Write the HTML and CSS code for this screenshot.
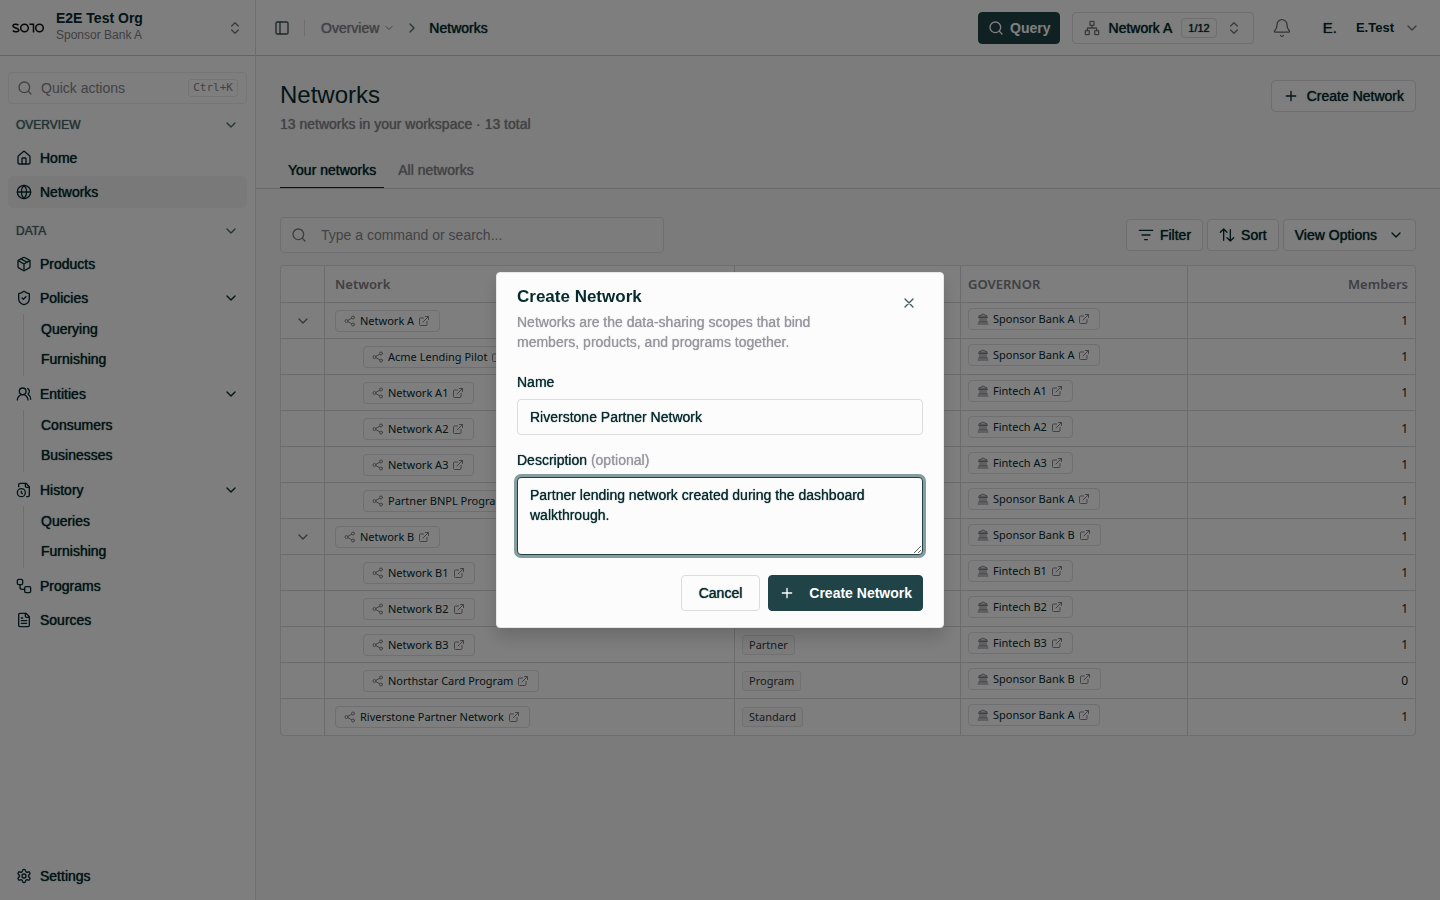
FILE: index.html
```html
<!DOCTYPE html>
<html lang="en">
<head>
<meta charset="utf-8">
<title>Networks</title>
<link rel="stylesheet" href="styles.css">
</head>
<body>
<svg class="sprite" aria-hidden="true">
  <symbol id="updown" viewBox="0 0 24 24"><path d="m7 15 5 5 5-5M7 9l5-5 5 5"/></symbol>
  <symbol id="down" viewBox="0 0 24 24"><path d="m6 9 6 6 6-6"/></symbol>
  <symbol id="right" viewBox="0 0 24 24"><path d="m9 18 6-6-6-6"/></symbol>
  <symbol id="search" viewBox="0 0 24 24"><circle cx="11" cy="11" r="8"/><path d="m21 21-4.3-4.3"/></symbol>
  <symbol id="home" viewBox="0 0 24 24"><path d="M15 21v-8a1 1 0 0 0-1-1h-4a1 1 0 0 0-1 1v8"/><path d="M3 10a2 2 0 0 1 .7-1.5l7-6a2 2 0 0 1 2.6 0l7 6A2 2 0 0 1 21 10v9a2 2 0 0 1-2 2H5a2 2 0 0 1-2-2z"/></symbol>
  <symbol id="globe" viewBox="0 0 24 24"><circle cx="12" cy="12" r="10"/><path d="M12 2a14.5 14.5 0 0 0 0 20 14.5 14.5 0 0 0 0-20M2 12h20"/></symbol>
  <symbol id="box" viewBox="0 0 24 24"><path d="m7.500 4.270 9 5.150"/><path d="M21 8a2 2 0 0 0-1-1.730l-7-4a2 2 0 0 0-2 0l-7 4A2 2 0 0 0 3 8v8a2 2 0 0 0 1 1.730l7 4a2 2 0 0 0 2 0l7-4A2 2 0 0 0 21 16Z"/><path d="m3.300 7 8.700 5 8.700-5M12 22V12"/></symbol>
  <symbol id="shield" viewBox="0 0 24 24"><path d="M20 13c0 5-3.500 7.500-7.660 8.950a1 1 0 0 1-.670-.010C7.500 20.500 4 18 4 13V6a1 1 0 0 1 1-1c2 0 4.500-1.200 6.240-2.720a1.170 1.170 0 0 1 1.520 0C14.510 3.810 17 5 19 5a1 1 0 0 1 1 1z"/><path d="m9 12 2 2 4-4"/></symbol>
  <symbol id="users" viewBox="0 0 24 24"><path d="M18 21a8 8 0 0 0-16 0"/><circle cx="10" cy="8" r="5"/><path d="M22 20c0-3.370-2-6.500-4-8a5 5 0 0 0-.450-8.300"/></symbol>
  <symbol id="fileclock" viewBox="0 0 24 24"><path d="M16 22h2a2 2 0 0 0 2-2V7l-5-5H6a2 2 0 0 0-2 2v3"/><path d="M14 2v4a2 2 0 0 0 2 2h4"/><circle cx="8" cy="16" r="6"/><path d="M9.500 17.500 8 16.250V14"/></symbol>
  <symbol id="flow" viewBox="0 0 24 24"><rect x="2" y="2" width="8" height="8" rx="2"/><path d="M6 10v4a3 3 0 0 0 3 3h4"/><rect x="13" y="13" width="9" height="9" rx="2"/></symbol>
  <symbol id="file" viewBox="0 0 24 24"><path d="M15 2H6a2 2 0 0 0-2 2v16a2 2 0 0 0 2 2h12a2 2 0 0 0 2-2V7Z"/><path d="M14 2v4a2 2 0 0 0 2 2h4M10 9H8M16 13H8M16 17H8"/></symbol>
  <symbol id="gear" viewBox="0 0 24 24"><path d="M12.220 2h-.440a2 2 0 0 0-2 2v.180a2 2 0 0 1-1 1.730l-.430.250a2 2 0 0 1-2 0l-.150-.080a2 2 0 0 0-2.730.730l-.220.380a2 2 0 0 0 .730 2.730l.150.100a2 2 0 0 1 1 1.720v.510a2 2 0 0 1-1 1.740l-.150.090a2 2 0 0 0-.730 2.730l.220.380a2 2 0 0 0 2.730.730l.150-.080a2 2 0 0 1 2 0l.430.250a2 2 0 0 1 1 1.730V20a2 2 0 0 0 2 2h.440a2 2 0 0 0 2-2v-.180a2 2 0 0 1 1-1.730l.430-.250a2 2 0 0 1 2 0l.150.080a2 2 0 0 0 2.730-.730l.220-.390a2 2 0 0 0-.730-2.730l-.150-.080a2 2 0 0 1-1-1.740v-.500a2 2 0 0 1 1-1.740l.150-.090a2 2 0 0 0 .730-2.730l-.220-.380a2 2 0 0 0-2.730-.730l-.150.080a2 2 0 0 1-2 0l-.430-.250a2 2 0 0 1-1-1.730V4a2 2 0 0 0-2-2z"/><circle cx="12" cy="12" r="3"/></symbol>
  <symbol id="panel" viewBox="0 0 24 24"><rect x="3" y="3" width="18" height="18" rx="2"/><path d="M9 3v18"/></symbol>
  <symbol id="tree" viewBox="0 0 24 24"><rect x="16" y="16" width="6" height="6" rx="1"/><rect x="2" y="16" width="6" height="6" rx="1"/><rect x="9" y="2" width="6" height="6" rx="1"/><path d="M5 16v-3a1 1 0 0 1 1-1h12a1 1 0 0 1 1 1v3M12 12V8"/></symbol>
  <symbol id="bell" viewBox="0 0 24 24"><path d="M10.270 21a2 2 0 0 0 3.460 0"/><path d="M3.260 15.330A1 1 0 0 0 4 17h16a1 1 0 0 0 .740-1.670C19.410 13.960 18 12.500 18 8A6 6 0 0 0 6 8c0 4.500-1.410 5.960-2.740 7.330"/></symbol>
  <symbol id="plus" viewBox="0 0 24 24"><path d="M5 12h14M12 5v14"/></symbol>
  <symbol id="close" viewBox="0 0 24 24"><path d="M18 6 6 18M6 6l12 12"/></symbol>
  <symbol id="filter" viewBox="0 0 24 24"><path d="M2 5h20M6 12h12M10 19h4"/></symbol>
  <symbol id="sort" viewBox="0 0 24 24"><path d="m2 8 5-5 5 5M7 3v17M22 16l-5 5-5-5M17 21V4"/></symbol>
  <symbol id="share" viewBox="0 0 24 24"><circle cx="18" cy="5" r="3"/><circle cx="5" cy="12" r="3"/><circle cx="18" cy="19" r="3"/><path d="m8 13.500 7.500 4M15.500 6.500 8 10.500"/></symbol>
  <symbol id="ext" viewBox="0 0 24 24"><path d="M15 3h6v6M10 14 21 3M18 13v6a2 2 0 0 1-2 2H5a2 2 0 0 1-2-2V8a2 2 0 0 1 2-2h6"/></symbol>
  <symbol id="bank" viewBox="0 0 24 24"><path d="M2 22h20M3 18h18M6 18v-8M10 18v-8M14 18v-8M18 18v-8M3 9h18M4 6l8-4 8 4Z"/></symbol>
</svg>

<div class="app">
  <aside class="sidebar">
    <button class="org" type="button">
      <svg class="logo" viewBox="0 0 32 10" role="img" aria-label="SOTO"><path d="M6.500 2.200C5 .8 1 .8 1 3c0 2.400 5.800 1.400 5.800 4 0 2.300-4.500 2.400-6 .6"/><circle cx="12.500" cy="5" r="3.800"/><path d="M17.500 1.200h4V9.500"/><circle cx="27.500" cy="5" r="3.800"/></svg>
      <span class="org-text"><strong>E2E Test Org</strong><span>Sponsor Bank A</span></span>
      <svg class="i dim"><use href="#updown"/></svg>
    </button>
    <nav class="nav">
      <button class="quick" type="button"><svg class="i"><use href="#search"/></svg><span>Quick actions</span><kbd>Ctrl+K</kbd></button>
      <button class="group" type="button">OVERVIEW<svg class="i"><use href="#down"/></svg></button>
      <a class="item" href="#"><svg class="i"><use href="#home"/></svg>Home</a>
      <a class="item active" href="#"><svg class="i"><use href="#globe"/></svg>Networks</a>
      <button class="group next" type="button">DATA<svg class="i"><use href="#down"/></svg></button>
      <a class="item" href="#"><svg class="i"><use href="#box"/></svg>Products</a>
      <a class="item" href="#"><svg class="i"><use href="#shield"/></svg>Policies<svg class="i end"><use href="#down"/></svg></a>
      <div class="sub"><a href="#">Querying</a><a href="#">Furnishing</a></div>
      <a class="item" href="#"><svg class="i"><use href="#users"/></svg>Entities<svg class="i end"><use href="#down"/></svg></a>
      <div class="sub"><a href="#">Consumers</a><a href="#">Businesses</a></div>
      <a class="item" href="#"><svg class="i"><use href="#fileclock"/></svg>History<svg class="i end"><use href="#down"/></svg></a>
      <div class="sub"><a href="#">Queries</a><a href="#">Furnishing</a></div>
      <a class="item" href="#"><svg class="i"><use href="#flow"/></svg>Programs</a>
      <a class="item" href="#"><svg class="i"><use href="#file"/></svg>Sources</a>
      <a class="item bottom" href="#"><svg class="i"><use href="#gear"/></svg>Settings</a>
    </nav>
  </aside>

  <div class="main">
    <header class="topbar">
      <button class="toggle" type="button" aria-label="Toggle sidebar"><svg class="i"><use href="#panel"/></svg></button>
      <span class="sep"></span>
      <nav class="crumbs"><a href="#">Overview<svg class="i small"><use href="#down"/></svg></a><svg class="i"><use href="#right"/></svg><span class="medium">Networks</span></nav>
      <div class="actions">
        <button class="btn primary query" type="button"><svg class="i"><use href="#search"/></svg>Query</button>
        <button class="btn selector" type="button"><svg class="i dim"><use href="#tree"/></svg><span class="medium">Network A</span><span class="count">1/12</span><svg class="i dim"><use href="#updown"/></svg></button>
        <button class="bell" type="button" aria-label="Notifications"><svg class="i large"><use href="#bell"/></svg></button>
        <button class="user" type="button"><span class="initial medium">E.</span><strong>E.Test</strong><svg class="i dim"><use href="#down"/></svg></button>
      </div>
    </header>

    <section class="page-head">
      <div class="head-row">
        <div><h1>Networks</h1><p>13 networks in your workspace · 13 total</p></div>
        <button class="btn create" type="button"><svg class="i"><use href="#plus"/></svg>Create Network</button>
      </div>
      <div class="tabs"><button class="tab on" type="button">Your networks</button><button class="tab" type="button">All networks</button></div>
    </section>

    <section class="content">
      <div class="toolbar">
        <label class="search"><svg class="i"><use href="#search"/></svg><input type="text" placeholder="Type a command or search..." aria-label="Search networks"></label>
        <div class="tools">
          <button class="btn" type="button"><svg class="i"><use href="#filter"/></svg>Filter</button>
          <button class="btn" type="button"><svg class="i"><use href="#sort"/></svg>Sort</button>
          <button class="btn view" type="button">View Options<svg class="i"><use href="#down"/></svg></button>
        </div>
      </div>
      <div class="table-wrap">
        <table>
          <colgroup><col class="c-toggle"><col class="c-name"><col class="c-type"><col class="c-gov"><col></colgroup>
          <thead><tr><th></th><th>Network</th><th></th><th>GOVERNOR</th><th class="num">Members</th></tr></thead>
          <tbody>
            <tr><td class="tog"><svg class="i"><use href="#down"/></svg></td><td class="name"><a class="chip" href="#"><svg class="i small"><use href="#share"/></svg>Network A<svg class="i small"><use href="#ext"/></svg></a></td><td></td><td class="gov"><a class="chip" href="#"><svg class="i small"><use href="#bank"/></svg>Sponsor Bank A<svg class="i small"><use href="#ext"/></svg></a></td><td class="num">1</td></tr>
            <tr><td></td><td class="name child"><a class="chip" href="#"><svg class="i small"><use href="#share"/></svg>Acme Lending Pilot<svg class="i small"><use href="#ext"/></svg></a></td><td></td><td class="gov"><a class="chip" href="#"><svg class="i small"><use href="#bank"/></svg>Sponsor Bank A<svg class="i small"><use href="#ext"/></svg></a></td><td class="num">1</td></tr>
            <tr><td></td><td class="name child"><a class="chip" href="#"><svg class="i small"><use href="#share"/></svg>Network A1<svg class="i small"><use href="#ext"/></svg></a></td><td></td><td class="gov"><a class="chip" href="#"><svg class="i small"><use href="#bank"/></svg>Fintech A1<svg class="i small"><use href="#ext"/></svg></a></td><td class="num">1</td></tr>
            <tr><td></td><td class="name child"><a class="chip" href="#"><svg class="i small"><use href="#share"/></svg>Network A2<svg class="i small"><use href="#ext"/></svg></a></td><td></td><td class="gov"><a class="chip" href="#"><svg class="i small"><use href="#bank"/></svg>Fintech A2<svg class="i small"><use href="#ext"/></svg></a></td><td class="num">1</td></tr>
            <tr><td></td><td class="name child"><a class="chip" href="#"><svg class="i small"><use href="#share"/></svg>Network A3<svg class="i small"><use href="#ext"/></svg></a></td><td></td><td class="gov"><a class="chip" href="#"><svg class="i small"><use href="#bank"/></svg>Fintech A3<svg class="i small"><use href="#ext"/></svg></a></td><td class="num">1</td></tr>
            <tr><td></td><td class="name child"><a class="chip" href="#"><svg class="i small"><use href="#share"/></svg>Partner BNPL Program<svg class="i small"><use href="#ext"/></svg></a></td><td></td><td class="gov"><a class="chip" href="#"><svg class="i small"><use href="#bank"/></svg>Sponsor Bank A<svg class="i small"><use href="#ext"/></svg></a></td><td class="num">1</td></tr>
            <tr><td class="tog"><svg class="i"><use href="#down"/></svg></td><td class="name"><a class="chip" href="#"><svg class="i small"><use href="#share"/></svg>Network B<svg class="i small"><use href="#ext"/></svg></a></td><td></td><td class="gov"><a class="chip" href="#"><svg class="i small"><use href="#bank"/></svg>Sponsor Bank B<svg class="i small"><use href="#ext"/></svg></a></td><td class="num">1</td></tr>
            <tr><td></td><td class="name child"><a class="chip" href="#"><svg class="i small"><use href="#share"/></svg>Network B1<svg class="i small"><use href="#ext"/></svg></a></td><td></td><td class="gov"><a class="chip" href="#"><svg class="i small"><use href="#bank"/></svg>Fintech B1<svg class="i small"><use href="#ext"/></svg></a></td><td class="num">1</td></tr>
            <tr><td></td><td class="name child"><a class="chip" href="#"><svg class="i small"><use href="#share"/></svg>Network B2<svg class="i small"><use href="#ext"/></svg></a></td><td></td><td class="gov"><a class="chip" href="#"><svg class="i small"><use href="#bank"/></svg>Fintech B2<svg class="i small"><use href="#ext"/></svg></a></td><td class="num">1</td></tr>
            <tr><td></td><td class="name child"><a class="chip" href="#"><svg class="i small"><use href="#share"/></svg>Network B3<svg class="i small"><use href="#ext"/></svg></a></td><td><span class="badge">Partner</span></td><td class="gov"><a class="chip" href="#"><svg class="i small"><use href="#bank"/></svg>Fintech B3<svg class="i small"><use href="#ext"/></svg></a></td><td class="num">1</td></tr>
            <tr><td></td><td class="name child"><a class="chip" href="#"><svg class="i small"><use href="#share"/></svg>Northstar Card Program<svg class="i small"><use href="#ext"/></svg></a></td><td><span class="badge">Program</span></td><td class="gov"><a class="chip" href="#"><svg class="i small"><use href="#bank"/></svg>Sponsor Bank B<svg class="i small"><use href="#ext"/></svg></a></td><td class="num">0</td></tr>
            <tr><td></td><td class="name"><a class="chip" href="#"><svg class="i small"><use href="#share"/></svg>Riverstone Partner Network<svg class="i small"><use href="#ext"/></svg></a></td><td><span class="badge">Standard</span></td><td class="gov"><a class="chip" href="#"><svg class="i small"><use href="#bank"/></svg>Sponsor Bank A<svg class="i small"><use href="#ext"/></svg></a></td><td class="num">1</td></tr>
          </tbody>
        </table>
      </div>
    </section>
  </div>
</div>

<div class="overlay">
  <form class="modal" role="dialog" aria-modal="true" aria-labelledby="dlg-title">
    <div class="modal-head">
      <div><h2 id="dlg-title">Create Network</h2><p>Networks are the data-sharing scopes that bind members, products, and programs together.</p></div>
      <button class="x" type="button" aria-label="Close"><svg class="i"><use href="#close"/></svg></button>
    </div>
    <div class="field"><label class="medium" for="n">Name</label><input id="n" type="text" value="Riverstone Partner Network"></div>
    <div class="field"><label for="d"><span class="medium">Description</span> <span class="opt">(optional)</span></label><textarea id="d">Partner lending network created during the dashboard walkthrough.</textarea></div>
    <div class="modal-foot">
      <button class="btn cancel" type="button">Cancel</button>
      <button class="btn primary submit" type="submit"><svg class="i"><use href="#plus"/></svg>Create Network</button>
    </div>
  </form>
</div>
</body>
</html>
```
FILE: styles.css
```css
:root {
  --ink: #062a2d;
  --muted: #96969c;
  --line: #dcdce0;
  --surface: #fcfcfc;
  --teal: #1f4347;
}
* { box-sizing: border-box; }
body { margin: 0; font: 14px/20px "Liberation Sans", Arial, sans-serif; color: var(--ink); background: #f6f6f6; }
button, input, textarea { font: inherit; color: inherit; }
button { border: 0; background: none; padding: 0; text-align: left; }
a { color: inherit; text-decoration: none; }
h1, h2, p { margin: 0; }
.sprite { position: absolute; width: 0; height: 0; }
.i { width: 16px; height: 16px; flex: none; fill: none; stroke: currentColor; stroke-width: 2; stroke-linecap: round; stroke-linejoin: round; }
.i.small { width: 12px; height: 12px; }
.i.large { width: 20px; height: 20px; stroke-width: 1.5; }
.dim { color: #77777c; }
.medium { text-shadow: 0 0 1px currentColor; }

.app { display: flex; min-height: 100vh; }
.sidebar { width: 256px; flex: none; display: flex; flex-direction: column; background: var(--surface); border-right: 1px solid var(--line); }
.org { display: flex; align-items: center; gap: 12px; height: 56px; padding: 0 12px; border-bottom: 1px solid #c8c8cc; }
.logo { width: 32px; height: 10px; fill: none; stroke: #111; stroke-width: 1.5; }
.org-text { display: flex; flex-direction: column; flex: 1; line-height: 18px; padding-bottom: 4px; }
.org-text span { font-size: 12px; line-height: 16px; color: #808085; }
.nav { flex: 1; display: flex; flex-direction: column; gap: 2px; padding: 16px 8px 8px; }
.quick { display: flex; align-items: center; gap: 8px; height: 32px; margin-bottom: 4px; padding: 0 8px; border: 1px solid #ededf0; border-radius: 4px; color: #85858b; }
.quick span { flex: 1; }
kbd { font: 11px/16px "DejaVu Sans Mono", monospace; padding: 0 4px; border: 1px solid #e8e8ec; border-radius: 3px; }
.group { display: flex; align-items: center; justify-content: space-between; height: 30px; padding: 0 8px; font-size: 12px; color: #4a666a; text-shadow: 0 0 1px currentColor; }
.group.next { margin-top: 6px; }
.item { display: flex; align-items: center; gap: 8px; height: 32px; padding: 0 8px; border-radius: 6px; text-shadow: 0 0 1px currentColor; }
.item.active { background: #f2f2f3; }
.item .end { margin-left: auto; }
.sub { display: flex; flex-direction: column; gap: 2px; margin: -2px 0 0 15px; padding: 2px 0; border-left: 1px solid var(--line); }
.sub a { height: 28px; padding: 3px 17px; text-shadow: 0 0 1px currentColor; }
.bottom { margin-top: auto; }

.main { flex: 1; min-width: 0; display: flex; flex-direction: column; }
.topbar { display: flex; align-items: center; height: 56px; padding: 0 20px 0 12px; background: var(--surface); border-bottom: 1px solid #c8c8cc; }
.toggle { display: grid; place-items: center; width: 28px; height: 28px; color: #3c5054; }
.sep { width: 1px; height: 16px; margin: 0 16px 0 8px; background: var(--line); }
.crumbs { display: flex; align-items: center; gap: 9px; }
.crumbs a { display: flex; align-items: center; gap: 4px; color: #85858b; text-shadow: 0 0 1px currentColor; }
.crumbs > .i { color: #55686b; }
.actions { display: flex; align-items: center; margin-left: auto; }
.btn { display: inline-flex; align-items: center; gap: 6px; height: 32px; padding: 0 11px; border: 1px solid var(--line); border-radius: 4px; background: var(--surface); text-shadow: 0 0 1px currentColor; }
.btn.primary { background: var(--teal); border-color: var(--teal); color: #fff; font-weight: 700; text-shadow: none; }
.query { margin-right: 12px; padding: 0 8px 0 9px; }
.selector { gap: 9px; padding: 0 11px; }
.count { padding: 0 6px; border: 1px solid var(--line); border-radius: 4px; font-size: 11px; line-height: 18px; }
.bell { display: grid; place-items: center; margin: 0 18px; color: #66666b; }
.user { display: flex; align-items: center; }
.user strong { font-size: 13px; }
.initial { margin: 0 19px 0 13px; font-size: 15px; }
.user .i { margin-left: 10px; }

.page-head { padding: 24px 24px 0; background: #f9f9f9; border-bottom: 1px solid #d2d2d6; }
.head-row { display: flex; justify-content: space-between; align-items: flex-start; }
h1 { font-size: 24px; line-height: 30px; font-weight: 400; }
.head-row p { margin-top: 4px; color: #85858b; text-shadow: 0 0 1px currentColor; }
.create { padding: 0 11px; gap: 8px; }
.tabs { display: flex; gap: 6px; margin-top: 18px; }
.tab { height: 36px; padding: 0 8px; color: #85858b; border-bottom: 1px solid transparent; text-shadow: 0 0 1px currentColor; }
.tab.on { color: var(--ink); border-color: var(--ink); }

.content { padding: 28px 24px; }
.toolbar { display: flex; align-items: center; justify-content: space-between; margin-bottom: 12px; }
.search { display: flex; align-items: center; gap: 14px; width: 384px; height: 36px; padding: 0 10px; background: #f9f9f9; border: 1px solid var(--line); border-radius: 4px; color: #7c7c82; }
.search input { flex: 1; min-width: 0; padding: 0; border: 0; outline: 0; background: none; }
.search input::placeholder { color: #85858b; opacity: 1; }
.tools { display: flex; gap: 4px; }
.view { gap: 11px; }

.table-wrap { border: 1px solid var(--line); border-radius: 4px; background: var(--surface); overflow: hidden; }
table { width: 100%; table-layout: fixed; border-collapse: separate; border-spacing: 0; font: 11px/16px "Noto Sans", sans-serif; }
.c-toggle { width: 44px; }
.c-name { width: 410px; }
.c-type { width: 226px; }
.c-gov { width: 227px; }
th, td { height: 36px; padding: 0 7px; border-right: 1px solid #d6d6da; border-bottom: 1px solid #d6d6da; text-align: left; vertical-align: middle; overflow: hidden; }
th { height: 37px; font-size: 13px; font-weight: 600; color: #808085; }
th:nth-child(2), .name { padding-left: 10px; }
.child { padding-left: 38px; }
th:last-child, td:last-child { border-right: 0; }
tbody tr:last-child td { border-bottom: 0; }
.num { text-align: right; font-size: 12px; }
th.num { font-size: 13px; }
.tog { padding: 0 0 0 14px; color: #707075; }
.tog .i { display: block; }
.chip { display: flex; width: fit-content; align-items: center; gap: 4px; height: 22px; padding: 0 9px 0 8px; border: 1px solid #dedee2; border-radius: 4px; white-space: nowrap; }
.chip .i { color: #85858b; }
.gov { padding: 0 7px 4px; }
.badge { display: block; width: fit-content; height: 20px; padding: 1px 6px; border: 1px solid #e2e2e5; border-radius: 3px; background: #f6f6f7; color: #333b3d; }

.overlay { position: fixed; inset: 0; display: flex; align-items: center; justify-content: center; background: rgba(0, 0, 0, .5); }
.modal { width: 448px; max-width: calc(100% - 32px); padding: 12px 20px 16px; background: var(--surface); border: 1px solid #e6e6e8; border-radius: 4px; box-shadow: 0 10px 16px rgba(0, 0, 0, .15); }
.modal-head { display: flex; justify-content: space-between; margin-bottom: 20px; }
.modal-head > div { max-width: 332px; }
h2 { font-size: 17px; line-height: 24px; }
.modal-head p { margin-top: 3px; color: var(--muted); text-shadow: 0 0 1px currentColor; }
.x { display: grid; place-items: center; width: 28px; height: 28px; margin-top: 4px; color: #3c5c60; }
.field { display: flex; flex-direction: column; gap: 7px; margin-bottom: 15px; }
.opt { color: var(--muted); text-shadow: 0 0 1px currentColor; }
.field input, .field textarea { width: 100%; padding: 7px 12px; background: var(--surface); border: 1px solid var(--line); border-radius: 4px; outline: 0; text-shadow: 0 0 1px currentColor; }
.field input { height: 36px; }
.field textarea { display: block; height: 78px; resize: vertical; border-color: var(--teal); box-shadow: 0 0 0 3px #869d9f; }
.modal-foot { display: flex; justify-content: flex-end; gap: 8px; margin-top: 20px; }
.modal-foot .btn { height: 36px; }
.cancel { padding: 0 17px; }
.submit { gap: 14px; padding: 0 10px; }
```
